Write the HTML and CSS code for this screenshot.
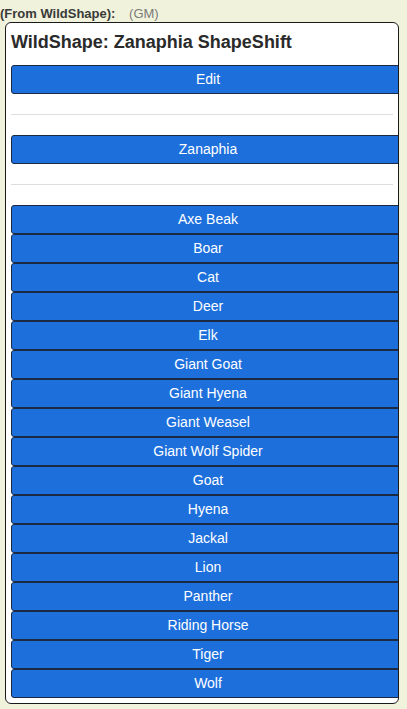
FILE: index.html
```html
<!DOCTYPE html>
<html>
<head>
<meta charset="utf-8">
<link rel="stylesheet" href="styles.css">
</head>
<body>
<div class="msg">
  <div class="by"><span class="from">(From WildShape):</span> <span class="gm">(GM)</span></div>
  <div class="card">
    <div class="title">WildShape: Zanaphia ShapeShift</div>
    <div class="btn">Edit</div>
    <div class="rule"></div>
    <div class="btn">Zanaphia</div>
    <div class="rule"></div>
    <div class="list">
      <div class="btn">Axe Beak</div>
      <div class="btn">Boar</div>
      <div class="btn">Cat</div>
      <div class="btn">Deer</div>
      <div class="btn">Elk</div>
      <div class="btn">Giant Goat</div>
      <div class="btn">Giant Hyena</div>
      <div class="btn">Giant Weasel</div>
      <div class="btn">Giant Wolf Spider</div>
      <div class="btn">Goat</div>
      <div class="btn">Hyena</div>
      <div class="btn">Jackal</div>
      <div class="btn">Lion</div>
      <div class="btn">Panther</div>
      <div class="btn">Riding Horse</div>
      <div class="btn">Tiger</div>
      <div class="btn">Wolf</div>
    </div>
  </div>
</div>
</body>
</html>
```
FILE: styles.css
```css
html, body {
  margin: 0;
  padding: 0;
  background: #f0f2dc;
  font-family: "Liberation Sans", Arial, sans-serif;
}
.msg {
  padding: 0;
}
.by {
  height: 22px;
  line-height: 27px;
  font-size: 13px;
  padding-left: 0;
  white-space: pre;
}
.from {
  font-weight: bold;
  color: #3a3a3a;
}
.gm {
  color: #7a7a7a;
  margin-left: 10px;
}
.card {
  margin-left: 5px;
  width: 394px;
  box-sizing: border-box;
  border: 1px solid #1a1a1a;
  border-radius: 6px;
  background: #ffffff;
  padding: 0 5px 5px 5px;
  overflow: hidden;
}
.title {
  font-size: 18px;
  font-weight: bold;
  color: #2a2a2a;
  line-height: 22px;
  padding-top: 8px;
  margin-bottom: 12px;
  white-space: nowrap;
}
.btn {
  width: 394px;
  height: 29px;
  box-sizing: border-box;
  border: 1px solid #1b2a42;
  border-radius: 3px;
  background: #1d6fdc;
  color: #ffffff;
  font-size: 14px;
  line-height: 27px;
  text-align: center;
}
.rule {
  height: 0;
  border-top: 1px solid #dddddd;
  margin: 20px 0;
}
.list {
  display: flex;
  flex-direction: column;
}
```
